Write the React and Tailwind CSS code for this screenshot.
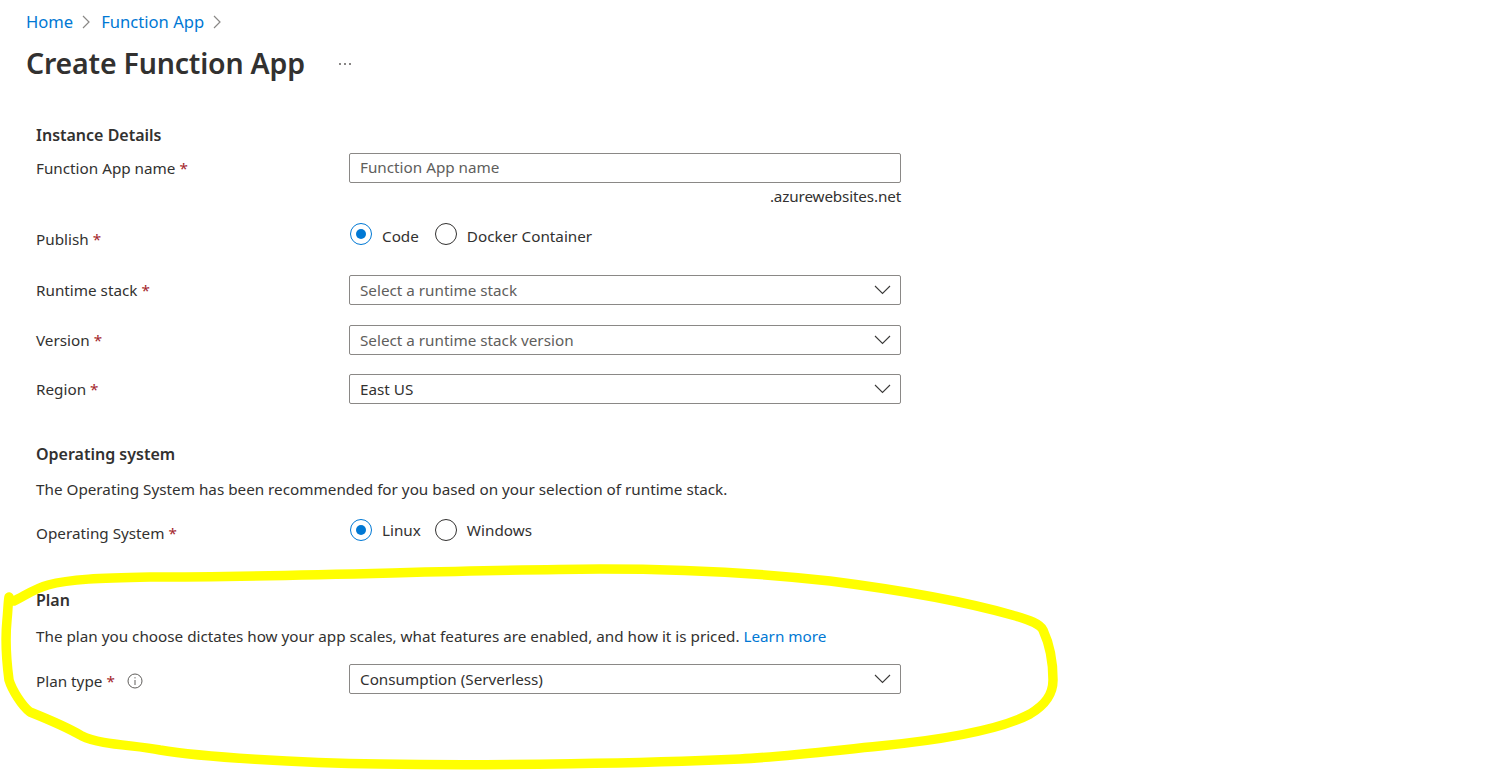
import React from 'react';

function Req() {
  return <span className="text-[#a4262c] ml-1">*</span>;
}

function Chevron({ className = 'w-[17px] h-[10px]' }) {
  return (
    <svg viewBox="0 0 17 10" className={className} fill="none" stroke="#3b3a39" strokeWidth="1.1">
      <path d="M1 1l7.5 7.5L16 1" />
    </svg>
  );
}

function Label({ children, extra }) {
  return (
    <div className="w-[313px] shrink-0 flex items-center text-[#323130]">
      <span>{children}</span>
      <Req />
      {extra}
    </div>
  );
}

function Select({ value, placeholder }) {
  return (
    <div className="w-[552px] h-[30px] border border-[#8a8886] rounded-[2px] flex items-center justify-between pl-[10px] pr-[9px] bg-white">
      <span className={placeholder ? 'text-[#605e5c]' : 'text-[#323130]'}>{value}</span>
      <Chevron />
    </div>
  );
}

function Radio({ checked, label, textClass = '' }) {
  return (
    <div className="flex items-center gap-[10px]">
      {checked ? (
        <span className="w-[22px] h-[22px] rounded-full border border-[#0078d4] flex items-center justify-center">
          <span className="w-[10px] h-[10px] rounded-full bg-[#0078d4]" />
        </span>
      ) : (
        <span className="w-[22px] h-[22px] rounded-full border border-[#323130]" />
      )}
      <span className={`text-[#323130] ${textClass}`}>{label}</span>
    </div>
  );
}

function SelectRow({ label, value, placeholder, extra, className, labelClass = '' }) {
  return (
    <div className={`flex items-center h-[30px] ${className}`}>
      <div className={labelClass}>
        <Label extra={extra}>{label}</Label>
      </div>
      <Select value={value} placeholder={placeholder} />
    </div>
  );
}

function Heading({ children, className }) {
  return <h2 className={`text-[16px] leading-[22px] font-semibold text-[#323130] ${className}`}>{children}</h2>;
}

export default function App() {
  return (
    <div className="relative w-[1501px] h-[770px] overflow-hidden bg-white text-[15.25px] leading-[20px] font-['Noto_Sans',sans-serif]">
      {/* Breadcrumb y título */}
      <nav className="flex items-center pl-[26px] pt-[11px] h-[33px] text-[16.6px] text-[#0078d4]">
        <span>Home</span>
        <svg viewBox="0 0 8 14" className="w-[8px] h-[14px] ml-[9px] mr-[11px]" fill="none" stroke="#8a8886" strokeWidth="1.2">
          <path d="M1 1l6 6-6 6" />
        </svg>
        <span>Function App</span>
        <svg viewBox="0 0 8 14" className="w-[8px] h-[14px] mx-[9px]" fill="none" stroke="#8a8886" strokeWidth="1.2">
          <path d="M1 1l6 6-6 6" />
        </svg>
      </nav>
      <div className="flex items-center pl-[26px] h-[42px] mt-[10px]">
        <h1 className="w-[311px] text-[28.5px] leading-[40px] font-semibold text-[#323130] tracking-[-0.2px] -translate-y-px">Create Function App</h1>
        <span className="flex gap-[3px] ml-[2px]">
          <i className="w-[2px] h-[2px] rounded-full bg-[#605e5c]" />
          <i className="w-[2px] h-[2px] rounded-full bg-[#605e5c]" />
          <i className="w-[2px] h-[2px] rounded-full bg-[#605e5c]" />
        </span>
      </div>

      {/* Formulario */}
      <main className="pl-9 pt-[39px]">
        <Heading>Instance Details</Heading>
        <div className="flex items-center h-[30px] mt-[7px]">
          <Label>Function App name</Label>
          <div className="w-[552px] h-[30px] border border-[#8a8886] rounded-[2px] flex items-center pl-[10px] pb-[2px] text-[#605e5c]">
            Function App name
          </div>
        </div>
        <div className="w-[865px] text-right text-[#323130] mt-[3px] tracking-[-0.15px]">.azurewebsites.net</div>

        <div className="flex mt-[17px] h-[30px]">
          <div className="pt-[6px]"><Label>Publish</Label></div>
          <div className="flex gap-[16px] h-[22px] items-center ml-px">
            <Radio checked label="Code" textClass="pt-[4px]" />
            <Radio label="Docker Container" textClass="pt-[4px]" />
          </div>
        </div>

        <SelectRow label="Runtime stack" value="Select a runtime stack" placeholder className="mt-[22px]" />
        <SelectRow label="Version" value="Select a runtime stack version" placeholder className="mt-[20px]" />
        <SelectRow label="Region" value="East US" className="mt-[19px]" />

        <Heading className="mt-[39px]">Operating system</Heading>
        <p className="text-[#323130] mt-[14px]">The Operating System has been recommended for you based on your selection of runtime stack.</p>
        <div className="flex mt-[20px] h-[30px]">
          <div className="pt-[4px]"><Label>Operating System</Label></div>
          <div className="flex gap-[14px] h-[22px] items-center ml-px">
            <Radio checked label="Linux" />
            <Radio label="Windows" />
          </div>
        </div>

        <Heading className="mt-[40px]">Plan</Heading>
        <p className="text-[#323130] mt-[15px]">
          The plan you choose dictates how your app scales, what features are enabled, and how it is priced.{' '}
          <span className="text-[#0078d4]">Learn more</span>
        </p>
        <SelectRow
          label="Plan type"
          value="Consumption (Serverless)"
          className="mt-[18px]"
          labelClass="pt-[3px]"
          extra={
            <svg viewBox="0 0 16 16" className="w-[16px] h-[16px] ml-[12px]" fill="none" stroke="#605e5c" strokeWidth="1">
              <circle cx="8" cy="8" r="7" />
              <path d="M8 7v5M8 4.2v1.2" />
            </svg>
          }
        />
      </main>

      {/* Marca amarilla sobre la captura */}
      <svg className="absolute inset-0 pointer-events-none" width="1501" height="770" fill="none" stroke="#ffff00" strokeWidth="9.5" strokeLinejoin="round" strokeLinecap="round">
        <path d="M14 601C26 595 36 588 48 585C70 579 100 578 150 577C300 577 450 570 600 569C680 569 760 573 830 581C900 590 970 603 1012 615C1030 620 1040 624 1043 630C1050 645 1053 660 1053 680C1053 695 1045 705 1030 714C1000 730 940 740 880 746C830 751 780 757 740 759C650 763 500 766 380 764C300 763 200 757 160 750C135 745 100 745 82 736C65 726 45 718 30 712C22 706 12 690 9 680C7 665 5 640 7 620C8 610 8 603 9 597" />
      </svg>
    </div>
  );
}
